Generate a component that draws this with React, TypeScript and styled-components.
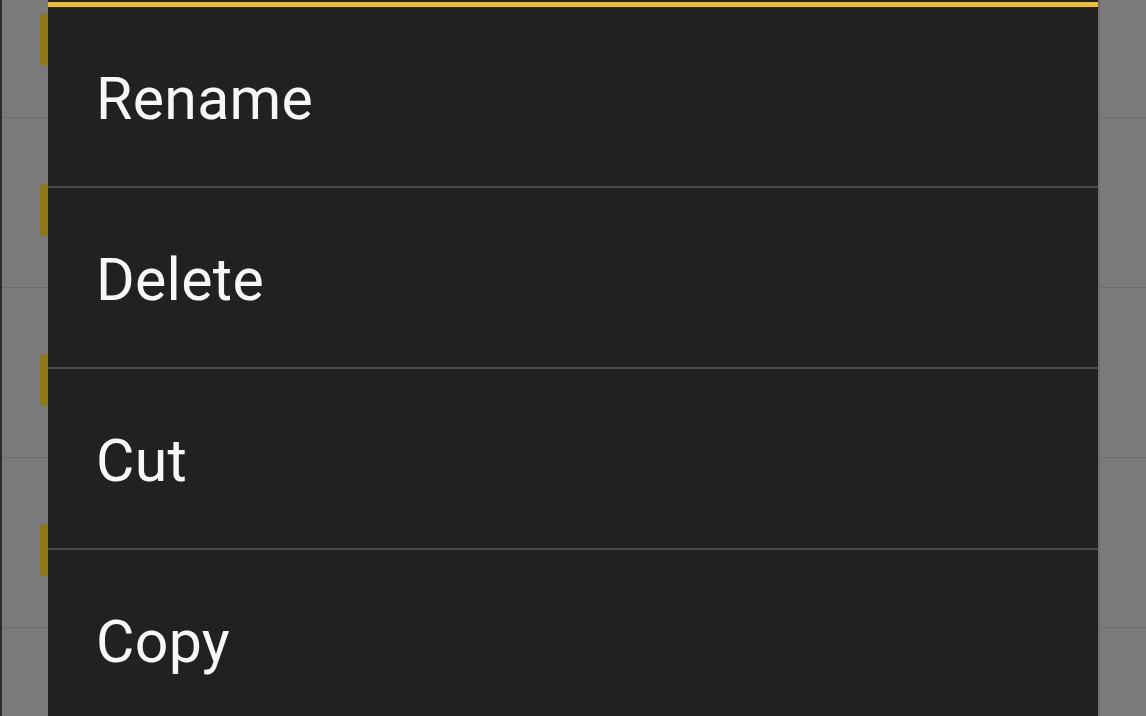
import styled, { createGlobalStyle } from "styled-components";

const GlobalStyle = createGlobalStyle`
  html, body {
    margin: 0;
    padding: 0;
    background: #7a7a7a;
  }
  body {
    font-family: Roboto, "Noto Sans", sans-serif;
  }
`;

const Screen = styled.div`
  position: relative;
  width: 1146px;
  height: 716px;
  overflow: hidden;
  background: #7a7a7a;
  border-left: 2px solid #2c2c2c;
  box-sizing: border-box;
`;

/* ---------------------------------------------------------------------------- */

const BackList = styled.div`
  display: flex;
  flex-direction: column;
  padding-top: 117px;
`;

const BackRow = styled.div`
  position: relative;
  height: 170px;
  border-top: 1px solid #6b6b6b;
  box-sizing: border-box;
`;

const BackMark = styled.div<{ $top: number }>`
  position: absolute;
  left: 38px;
  top: ${(p) => p.$top}px;
  width: 8px;
  height: 52px;
  border-radius: 4px 0 0 4px;
  background: #8e7716;
`;

/* ---------------------------------------------------------------------------- */

const Dialog = styled.div`
  position: absolute;
  left: 46px;
  top: 0;
  width: 1050px;
  padding-top: 2px;
  background: #212121;
  box-shadow: 2px 0 0 #6f6f6f;
`;

const TitleBar = styled.div`
  height: 5px;
  background: #e6ba45;
`;

const Item = styled.div`
  display: flex;
  align-items: center;
  height: 181px;
  padding: 4px 0 0 48px;
  box-sizing: border-box;
  border-bottom: 2px solid #4a4a4a;
  color: #f7f7f7;
  font-family: Roboto, "Noto Sans", sans-serif;
  font-size: 59px;
  font-weight: 400;
  letter-spacing: 0.3px;
`;

const items = ["Rename", "Delete", "Cut", "Copy"];

export default function App() {
  return (
    <>
      <GlobalStyle />
      <Screen>
        <BackMark $top={13} />
        <BackList>
          {[0, 1, 2, 3].map((i) => (
            <BackRow key={i}>{i < 3 && <BackMark $top={66} />}</BackRow>
          ))}
        </BackList>
        <Dialog>
          <TitleBar />
          {items.map((label) => (
            <Item key={label}>{label}</Item>
          ))}
        </Dialog>
      </Screen>
    </>
  );
}
